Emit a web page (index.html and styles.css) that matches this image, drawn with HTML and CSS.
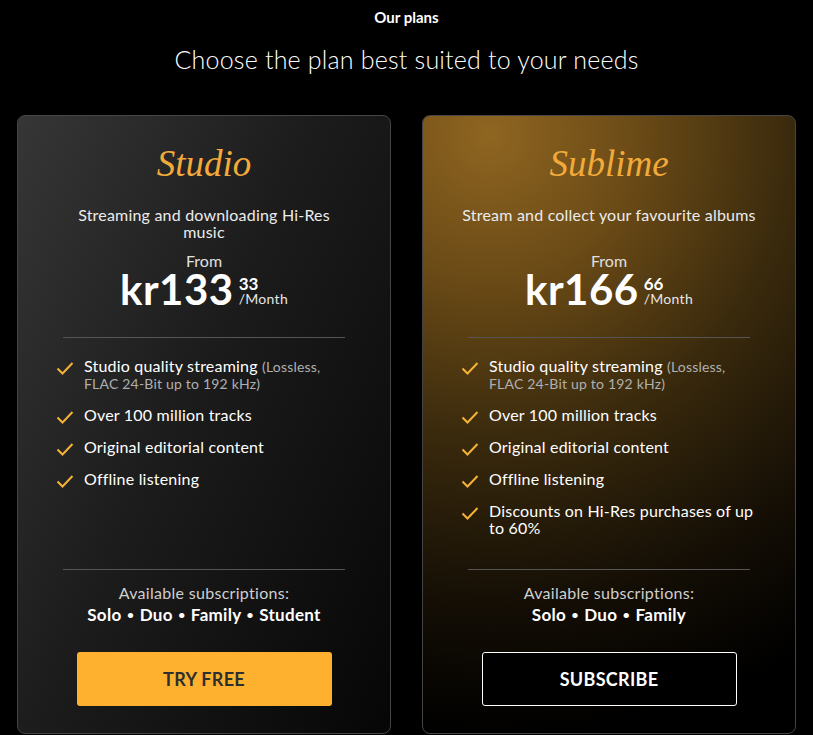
FILE: index.html
```html
<!DOCTYPE html>
<html>
  <head>
    <meta name="viewport" content="width=device-width, initial-scale=1.0">
    <link rel="stylesheet" href="styles.css">
  </head>
  <body>
    <div class="intro">
      <div class="intro__kicker">Our plans</div>
      <h1 class="intro__title">Choose the plan best suited to your needs</h1>
    </div>
    <div class="plans">
      <div class="plan plan--studio">
        <h2 class="plan__name">Studio</h2>
        <p class="plan__desc">Streaming and downloading Hi-Res music</p>
        <div class="plan__from">From</div>
        <div class="price">
          <span class="price__main">kr133</span>
          <span class="price__side"><span class="price__cents">33</span><span class="price__unit">/Month</span></span>
        </div>
        <hr class="plan__rule">
        <ul class="features">
          <li class="feature"><svg class="check" viewBox="0 0 18 13"><path d="M1.5 6.5 L6.5 11.5 L16.5 1"/></svg><span>Studio quality streaming <small>(Lossless, FLAC 24-Bit up to 192 kHz)</small></span></li>
          <li class="feature"><svg class="check" viewBox="0 0 18 13"><path d="M1.5 6.5 L6.5 11.5 L16.5 1"/></svg><span>Over 100 million tracks</span></li>
          <li class="feature"><svg class="check" viewBox="0 0 18 13"><path d="M1.5 6.5 L6.5 11.5 L16.5 1"/></svg><span>Original editorial content</span></li>
          <li class="feature"><svg class="check" viewBox="0 0 18 13"><path d="M1.5 6.5 L6.5 11.5 L16.5 1"/></svg><span>Offline listening</span></li>
        </ul>
        <div class="plan__foot">
          <hr class="plan__rule">
          <div class="subs__label">Available subscriptions:</div>
          <div class="subs__list">Solo <span class="dot">•</span> Duo <span class="dot">•</span> Family <span class="dot">•</span> Student</div>
          <button class="btn btn--gold">TRY FREE</button>
        </div>
      </div>
      <div class="plan plan--sublime">
        <h2 class="plan__name">Sublime</h2>
        <p class="plan__desc">Stream and collect your favourite albums</p>
        <div class="plan__from">From</div>
        <div class="price">
          <span class="price__main">kr166</span>
          <span class="price__side"><span class="price__cents">66</span><span class="price__unit">/Month</span></span>
        </div>
        <hr class="plan__rule">
        <ul class="features">
          <li class="feature"><svg class="check" viewBox="0 0 18 13"><path d="M1.5 6.5 L6.5 11.5 L16.5 1"/></svg><span>Studio quality streaming <small>(Lossless, FLAC 24-Bit up to 192 kHz)</small></span></li>
          <li class="feature"><svg class="check" viewBox="0 0 18 13"><path d="M1.5 6.5 L6.5 11.5 L16.5 1"/></svg><span>Over 100 million tracks</span></li>
          <li class="feature"><svg class="check" viewBox="0 0 18 13"><path d="M1.5 6.5 L6.5 11.5 L16.5 1"/></svg><span>Original editorial content</span></li>
          <li class="feature"><svg class="check" viewBox="0 0 18 13"><path d="M1.5 6.5 L6.5 11.5 L16.5 1"/></svg><span>Offline listening</span></li>
          <li class="feature"><svg class="check" viewBox="0 0 18 13"><path d="M1.5 6.5 L6.5 11.5 L16.5 1"/></svg><span>Discounts on Hi-Res purchases of up to 60%</span></li>
        </ul>
        <div class="plan__foot">
          <hr class="plan__rule">
          <div class="subs__label">Available subscriptions:</div>
          <div class="subs__list">Solo <span class="dot">•</span> Duo <span class="dot">•</span> Family</div>
          <button class="btn btn--outline">SUBSCRIBE</button>
        </div>
      </div>
    </div>
  </body>
</html>
```

FILE: styles.css
```css
* {
  box-sizing: border-box;
}
html, body {
  margin: 0;
  background: #000;
  color: #fff;
  font-family: Lato, "Open Sans", sans-serif;
}

.intro {
  text-align: center;
  padding-top: 7px;
}
.intro__kicker {
  font-size: 15px;
  font-weight: bold;
  line-height: 20px;
}
.intro__title {
  margin: 16px 0 0;
  font-size: 25px;
  font-weight: 300;
  line-height: 32px;
  letter-spacing: 0.2px;
}

.plans {
  display: grid;
  grid-template-columns: 1fr 1fr;
  gap: 31px;
  padding: 40px 17px 0;
}
.plan {
  display: flex;
  flex-direction: column;
  border: 1px solid #444;
  border-radius: 8px;
  padding: 27px 0 27px;
  text-align: center;
}
.plan--studio {
  background: linear-gradient(115deg, #363636 0%, #1c1c1c 45%, #060606 100%);
}
.plan--sublime {
  background: radial-gradient(circle at 18% 3%, #8f6521 0%, #6a4a16 22%, #3a2a0d 45%, #140e05 70%, #000 90%);
}
.plan__name {
  margin: 0;
  font-family: "Liberation Serif", serif;
  font-style: italic;
  font-weight: normal;
  font-size: 37px;
  line-height: 42px;
  color: #f2aa3a;
}
.plan__desc {
  margin: 21px 39px 0;
  min-height: 34px;
  font-size: 16px;
  line-height: 17px;
  letter-spacing: 0.2px;
  color: #ececec;
}
.plan__from {
  margin-top: 12px;
  font-size: 16px;
  line-height: 17px;
  color: #e0e0e0;
}
.price {
  display: flex;
  justify-content: center;
  align-items: center;
  height: 41px;
}
.price__main {
  font-size: 42px;
  font-weight: bold;
  line-height: 41px;
  letter-spacing: 0.5px;
}
.price__side {
  display: flex;
  flex-direction: column;
  text-align: left;
  margin-left: 5px;
  margin-top: 4px;
}
.price__cents {
  font-size: 17px;
  font-weight: bold;
  line-height: 15px;
}
.price__unit {
  font-size: 14px;
  line-height: 16px;
  letter-spacing: 0.3px;
  color: #e6e6e6;
}
.plan__rule {
  border: 0;
  border-top: 1px solid #555;
  margin: 27px 45px 0;
}

.features {
  list-style: none;
  margin: 19px 38px 0 38px;
  padding: 0;
  display: flex;
  flex-direction: column;
  gap: 15px;
  text-align: left;
  flex: 1;
}
.feature {
  display: flex;
  align-items: flex-start;
  font-size: 16px;
  line-height: 17px;
  letter-spacing: 0.2px;
}
.feature small {
  font-size: 14px;
  line-height: 1;
  color: #b0b0b0;
}
.check {
  flex: none;
  width: 18px;
  height: 13px;
  margin: 5px 10px -1px 0;
  fill: none;
  stroke: #f5b335;
  stroke-width: 2;
}

.plan__foot {
  margin-top: 33px;
}
.plan__foot .plan__rule {
  margin-top: 0;
}
.subs__label {
  margin-top: 14px;
  font-size: 16px;
  line-height: 17px;
  letter-spacing: 0.3px;
  color: #cfcfcf;
}
.subs__list {
  margin-top: 4px;
  font-size: 17px;
  font-weight: bold;
  line-height: 20px;
  letter-spacing: 0.3px;
}
.dot {
  font-size: 12px;
  vertical-align: 2px;
  margin: 0 1px;
}
.btn {
  display: block;
  width: 255px;
  height: 54px;
  margin: 27px auto 0;
  border-radius: 3px;
  font-family: Lato, sans-serif;
  font-size: 18px;
  font-weight: bold;
  letter-spacing: 0.3px;
  cursor: pointer;
}
.btn--gold {
  background: #feb12e;
  border: 0;
  color: #2e2e2e;
}
.btn--outline {
  background: #000;
  border: 1px solid #fff;
  color: #fff;
}
```
